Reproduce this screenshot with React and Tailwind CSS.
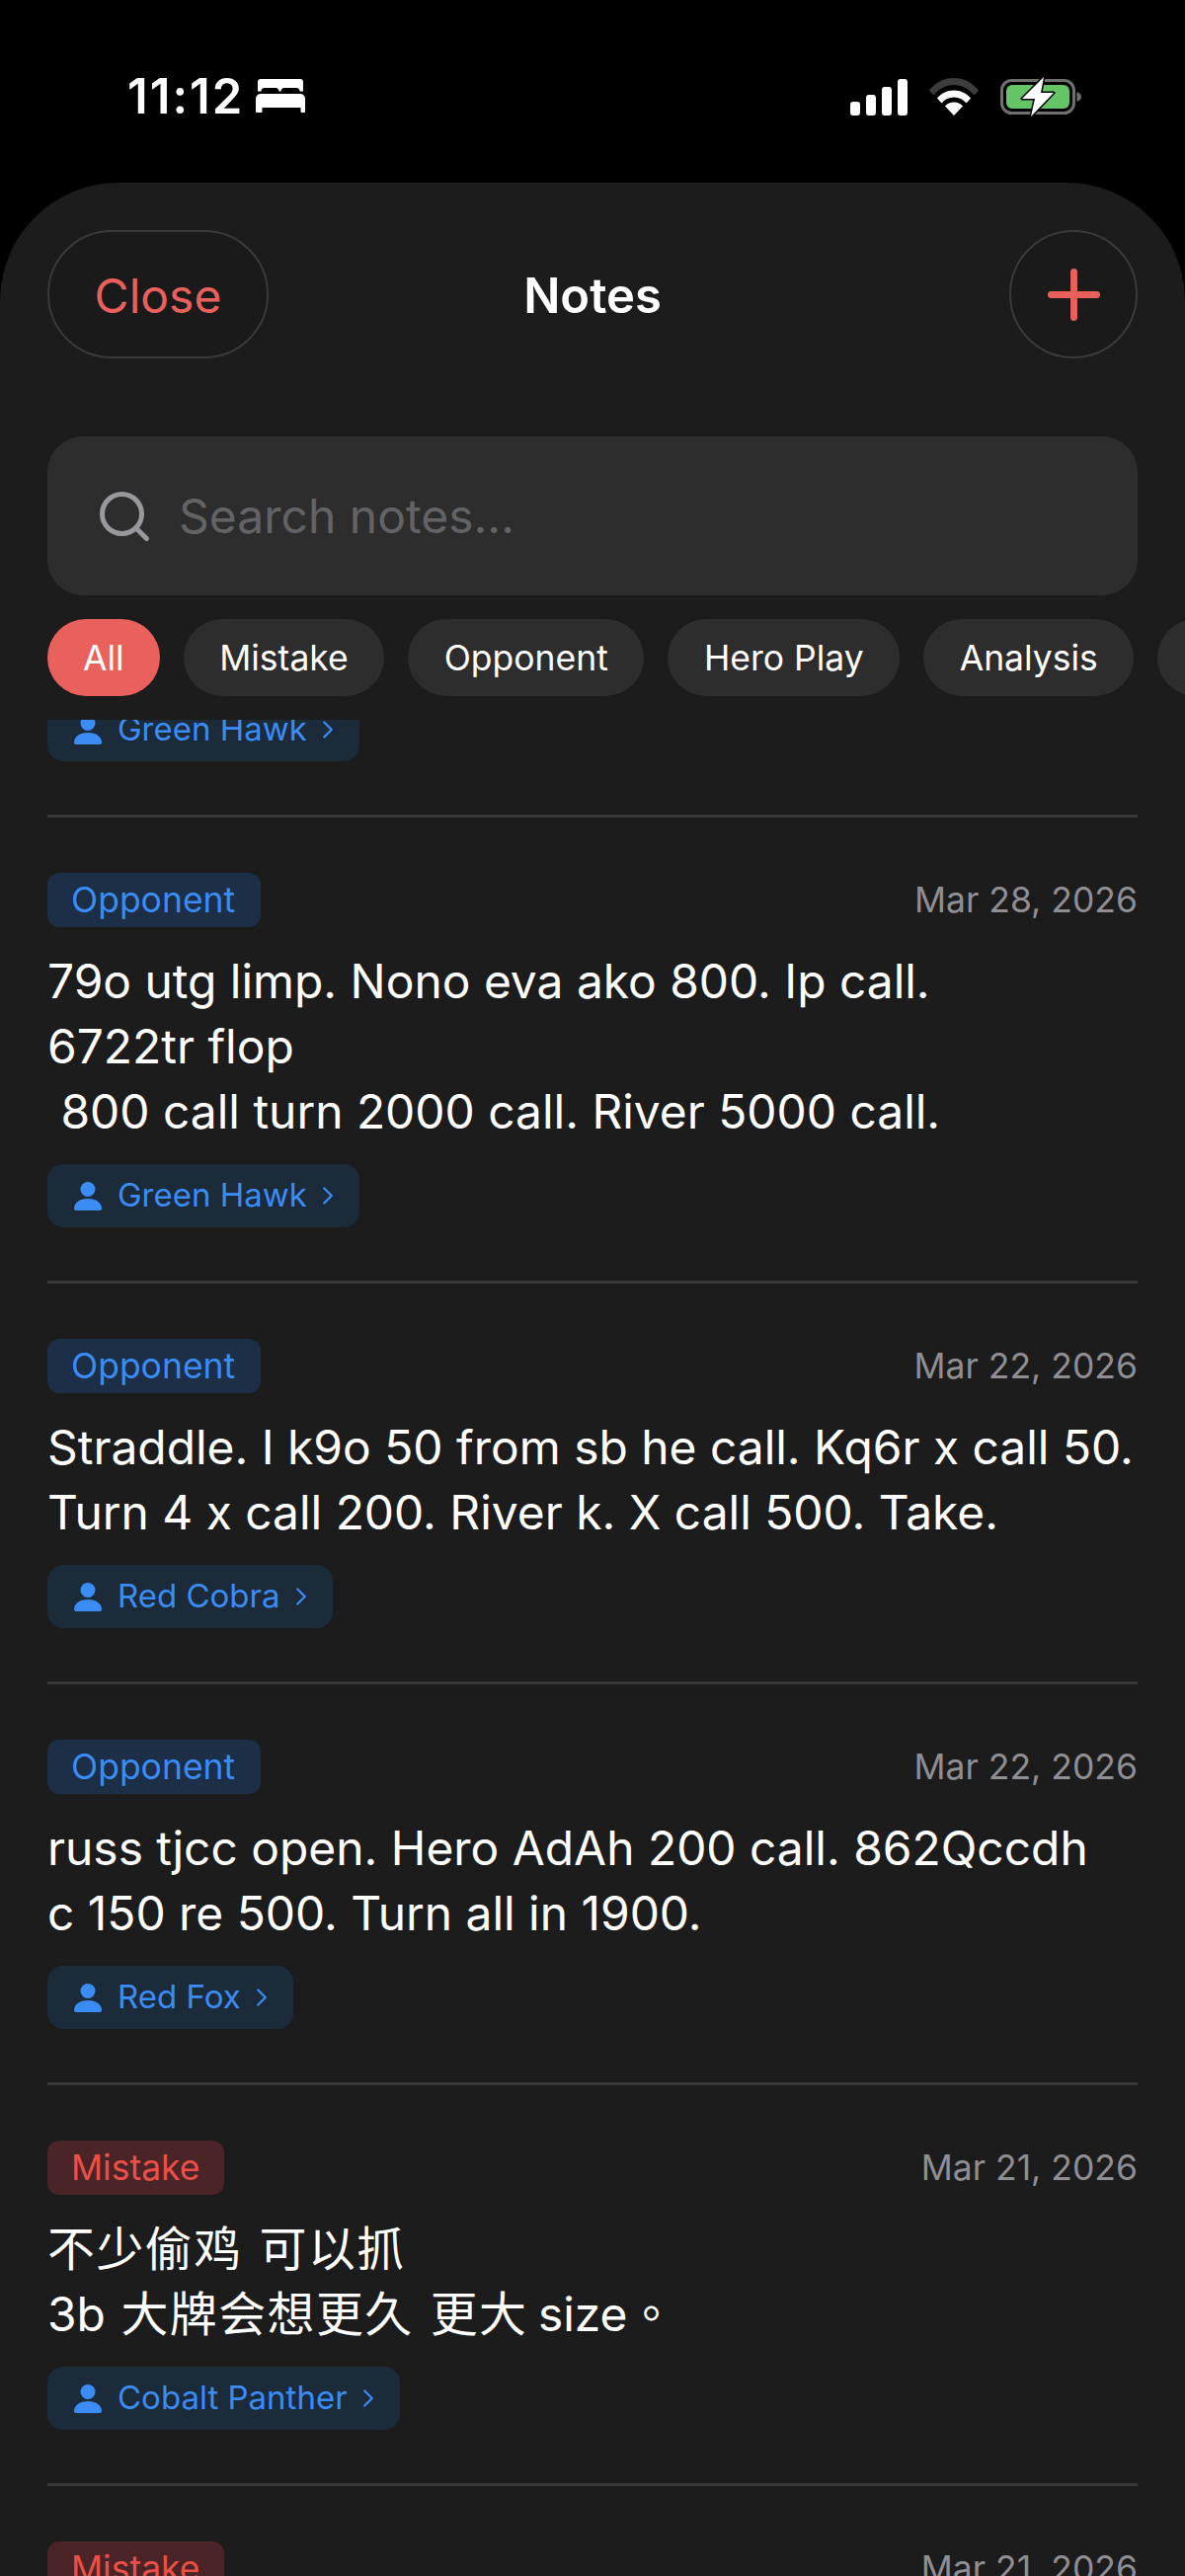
import { Search, Plus, ChevronRight } from 'lucide-react'

const font = { fontFamily: 'Inter, "Noto Sans CJK SC", sans-serif' }

const notes = [
  {
    kind: 'Opponent',
    date: 'Mar 28, 2026',
    body: '79o utg limp. Nono eva ako 800. Ip call.\n6722tr flop\n 800 call turn 2000 call. River 5000 call.',
    player: 'Green Hawk',
  },
  {
    kind: 'Opponent',
    date: 'Mar 22, 2026',
    body: 'Straddle. I k9o 50 from sb he call. Kq6r x call 50.\nTurn 4 x call 200. River k. X call 500. Take.',
    player: 'Red Cobra',
  },
  {
    kind: 'Opponent',
    date: 'Mar 22, 2026',
    body: 'russ tjcc open. Hero AdAh 200 call. 862Qccdh\nc 150 re 500. Turn all in 1900.',
    player: 'Red Fox',
  },
  {
    kind: 'Mistake',
    date: 'Mar 21, 2026',
    body: (
      <span className="tracking-[1.500px] [word-spacing:2px]">
        不少偷鸡 可以抓{'\n'}
        <span className="tracking-normal">3b </span>大牌会想更久 更大
        <span className="tracking-normal [word-spacing:-3px]"> size</span>
        <span className="font-['Noto_Sans_CJK_TC'] leading-none">。</span>
      </span>
    ),
    player: 'Cobalt Panther',
  },
  {
    kind: 'Mistake',
    date: 'Mar 21, 2026',
    body: '',
    player: '',
  },
]

const chips = ['Mistake', 'Opponent', 'Hero Play', 'Analysis']

function BedIcon() {
  return (
    <svg width="50" height="34" viewBox="0 0 50 34" fill="white">
      <path d="M5 0h40a3 3 0 0 1 3 3v9.500h-3.500c0-2.200-1.300-3.500-3.500-3.500h-12c-2.200 0-3.500 1.300-3.500 3.500h-2c0-2.200-1.300-3.500-3.500-3.500H9c-2.200 0-3.500 1.300-3.500 3.500H2V3a3 3 0 0 1 3-3z" />
      <path d="M5 15h40a5 5 0 0 1 5 5v13a1 1 0 0 1-1 1h-2.500a1 1 0 0 1-1-1v-4H6.500v4a1 1 0 0 1-1 1H1a1 1 0 0 1-1-1V20a5 5 0 0 1 5-5z" />
    </svg>
  )
}

function SignalIcon() {
  return (
    <svg width="58" height="37" viewBox="0 0 58 37" fill="white">
      <rect x="0" y="23" width="10" height="14" rx="3" />
      <rect x="16" y="16" width="10" height="21" rx="3" />
      <rect x="32" y="8" width="10" height="29" rx="3" />
      <rect x="48" y="0" width="10" height="37" rx="3" />
    </svg>
  )
}

function WifiIcon() {
  return (
    <svg width="50" height="38" viewBox="0 0 50 38">
      <path d="M0 12.500C6.500 4.500 15 0 25 0s18.500 4.500 25 12.500l-4.500 5C39.500 10.500 33 7 25 7S10.500 10.500 4.500 17.500z" fill="#3d3d3d" />
      <path d="M8 20.500C12 15.500 18 12.500 25 12.500s13 3 17 8l-4.500 5C34.500 21.500 30 19.500 25 19.500s-9.500 2-12.500 6z" fill="white" />
      <path d="M16 28.500c2.200-2.500 5.400-4 9-4s6.800 1.500 9 4L25 38z" fill="white" />
    </svg>
  )
}

function BatteryIcon() {
  return (
    <svg width="82" height="40" viewBox="0 0 82 40">
      <rect x="1.500" y="3.500" width="73" height="33" rx="10" fill="none" stroke="#707070" strokeWidth="3" />
      <rect x="6" y="8" width="64" height="24" rx="6" fill="#65c466" />
      <path d="M77.500 15c3 1 4.500 3 4.500 5s-1.500 4-4.500 5z" fill="#707070" />
      <path d="M44 0 22 22h13l-4 18 23-24H41z" fill="white" stroke="black" strokeWidth="3" paintOrder="stroke" strokeLinejoin="round" />
    </svg>
  )
}

function PersonIcon() {
  return (
    <svg width="28" height="29" viewBox="0 0 28 29" fill="#3b8cf5">
      <circle cx="14" cy="7.500" r="7.500" />
      <path d="M0 27c0-6 6-10 14-10s14 4 14 10c0 1-1 2-2 2H2c-1 0-2-1-2-2z" />
    </svg>
  )
}

function PlayerTag({ name }) {
  return (
    <div className="inline-flex items-center h-[64px] pl-[27px] pr-[17px] rounded-[16px] bg-[#1c2b3a] text-[#3b8cf5] text-[33px]">
      <PersonIcon />
      <span className="ml-[16px]">{name}</span>
      <ChevronRight size={30} strokeWidth={1.800} className="ml-[6px]" />
    </div>
  )
}

function NoteRow({ note }) {
  const mistake = note.kind === 'Mistake'
  return (
    <div className="border-t-[3px] border-[#38383a] pt-[56px] pb-[54px]">
      <div className="flex items-center justify-between h-[55px]">
        <span className={`h-[55px] flex items-center pl-[24px] rounded-[12px] text-[35.500px] ${mistake ? 'pr-[24px] bg-[#4a2426] text-[#eb5048]' : 'pr-[26px] bg-[#1c2f47] text-[#3b8cf5]'}`}>
          {note.kind}
        </span>
        <span className="text-[35.500px] text-[#8e8e93]">{note.date}</span>
      </div>
      {note.body && (
        <p className="mt-[22px] text-[47.900px] leading-[66px] text-white whitespace-pre-wrap">{note.body}</p>
      )}
      {note.player && (
        <div className="mt-[20px] flex">
          <PlayerTag name={note.player} />
        </div>
      )}
    </div>
  )
}

export default function App() {
  return (
    <div className="h-[2609px] w-[1200px] overflow-hidden bg-black flex flex-col" style={font}>
      {/* status bar */}
      <div className="h-[185px] shrink-0 flex items-start justify-between pt-[78px] pl-[129px] pr-[105px]">
        <div className="flex items-center gap-[12px] h-[38px]">
          <span className="text-[49px] font-semibold text-white leading-none tracking-[2px]">11:12</span>
          <BedIcon />
        </div>
        <div className="flex items-center gap-[22px]">
          <SignalIcon />
          <WifiIcon />
          <BatteryIcon />
        </div>
      </div>

      <div className="flex-1 min-h-0 flex flex-col bg-[#1c1c1c] rounded-t-[120px]">
        {/* header */}
        <div className="flex items-center px-[48px] pt-[48px]">
          <div className="flex-1 flex">
            <button className="w-[224px] h-[130px] pt-[3px] rounded-full border-2 border-[#3a3a3a] bg-[#1a1a1a] text-[#e9605c] text-[48px]">Close</button>
          </div>
          <span className="mt-[3px] text-[49px] font-semibold text-white">Notes</span>
          <div className="flex-1 flex justify-end">
            <button className="w-[130px] h-[130px] rounded-full border-2 border-[#3a3a3a] bg-[#1a1a1a] text-[#e9605c] flex items-center justify-center">
              <Plus size={79} strokeWidth={2.100} />
            </button>
          </div>
        </div>

        {/* search */}
        <div className="mx-[48px] mt-[79px] h-[161px] rounded-[36px] bg-[#2d2d2d] flex items-center pl-[48px] shrink-0">
          <Search size={60} strokeWidth={2} className="text-[#98989d] shrink-0" />
          <span className="ml-[25px] text-[48px] text-[#636366]">Search notes...</span>
        </div>

        {/* filters */}
        <div className="flex gap-[24px] pl-[48px] mt-[24px] h-[78px] shrink-0 overflow-hidden">
          <span className="h-[78px] px-[36px] pt-[1px] rounded-full bg-[#e9605c] text-white text-[35.500px] flex items-center shrink-0">All</span>
          {chips.map((c) => (
            <span key={c} className="h-[78px] px-[36.500px] pt-[1px] rounded-full bg-[#2d2d2d] text-white text-[35.500px] flex items-center shrink-0">{c}</span>
          ))}
          <span className="h-[78px] w-[80px] rounded-full bg-[#2d2d2d] shrink-0" />
        </div>

        {/* list */}
        <div className="mt-[24px] flex-1 min-h-0 overflow-hidden px-[48px]">
          <div className="-mt-[22px] mb-[54px] flex">
            <PlayerTag name="Green Hawk" />
          </div>
          {notes.map((n, i) => (
            <NoteRow key={i} note={n} />
          ))}
        </div>
      </div>
    </div>
  )
}
